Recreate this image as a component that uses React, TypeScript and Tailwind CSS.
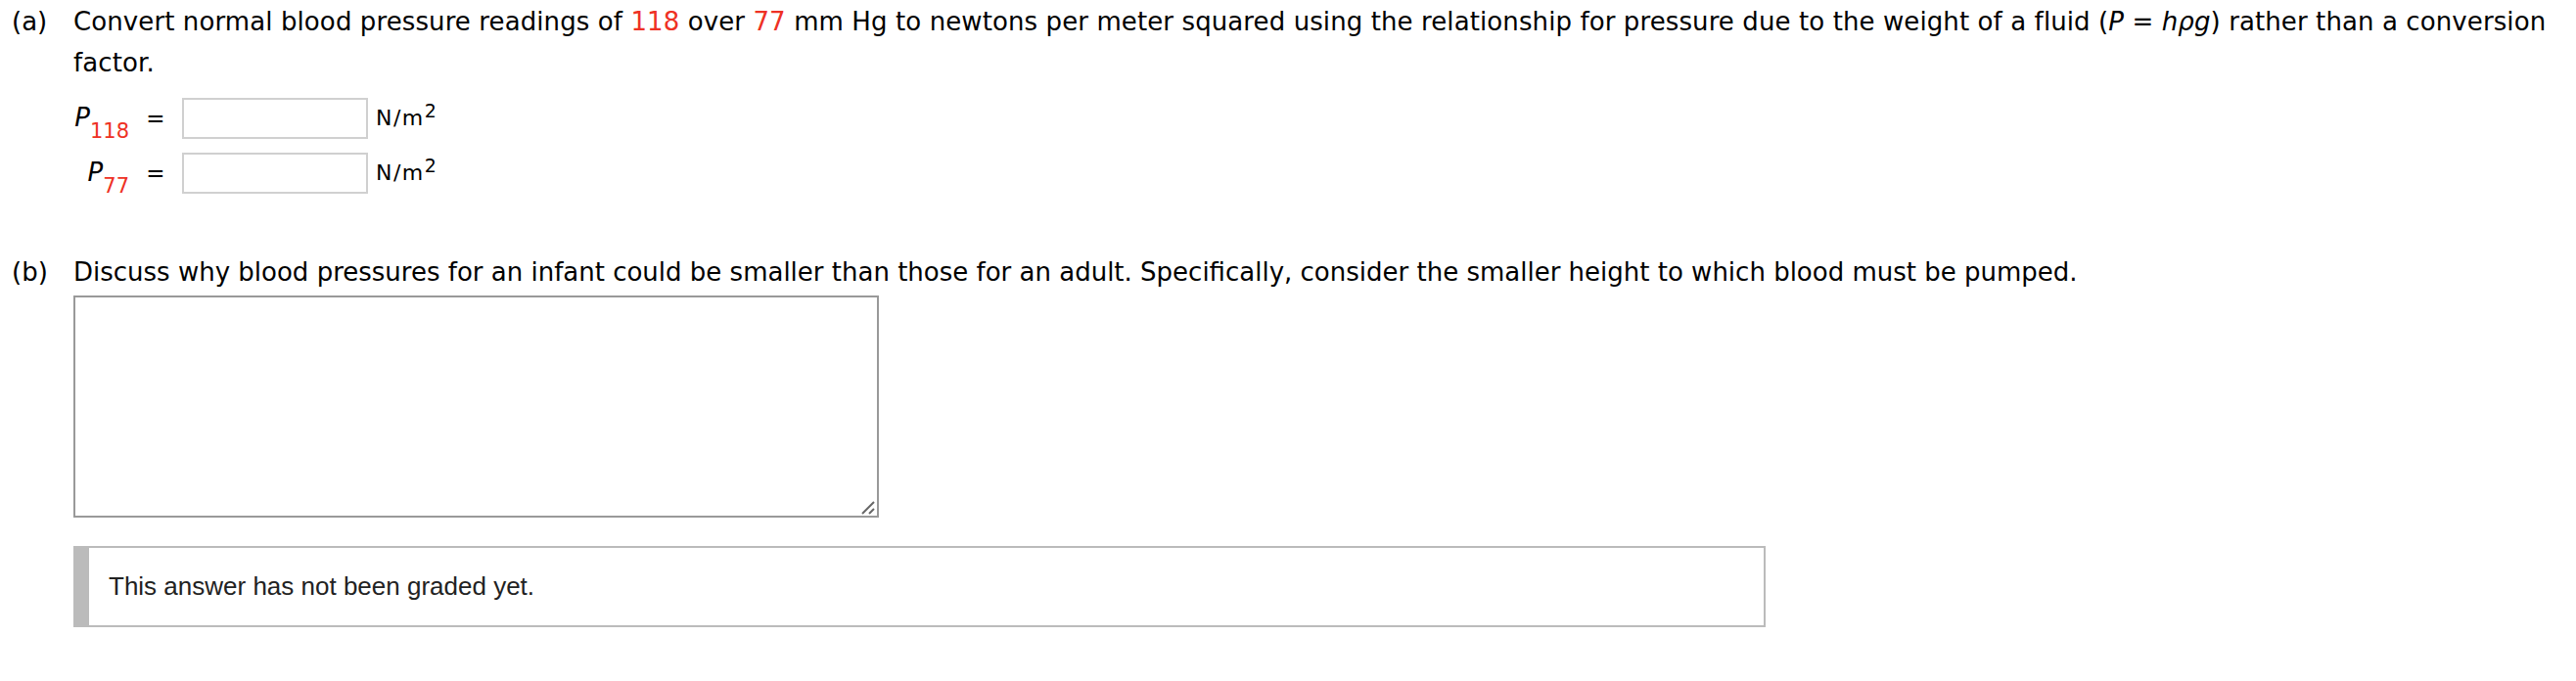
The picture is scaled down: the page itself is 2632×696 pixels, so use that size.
import React from "react";

function Red({ children }: { children: React.ReactNode }) {
  return <span className="text-[#ee3124]">{children}</span>;
}

function Row({ sub }: { sub: string }) {
  return (
    <div className="flex items-center h-[42px]">
      <div className="w-[57px] text-right whitespace-nowrap">
        <i>P</i>
        <span className="relative top-[12px] text-[21px] text-[#ee3124]">{sub}</span>
      </div>
      <div className="w-[54px] text-center text-[23px]">=</div>
      <input
        type="text"
        className="w-[190px] h-[42px] border-2 border-[#d0d0d0] bg-white outline-none"
      />
      <div className="ml-[8px] text-[22px] tracking-[1.5px] whitespace-nowrap">
        N/m<span className="relative top-[-8px] text-[19px]">2</span>
      </div>
    </div>
  );
}

export default function App() {
  return (
    <div className="w-[2632px] h-[696px] bg-white text-black font-['DejaVu_Sans',Verdana,sans-serif] text-[26px] leading-[42px]">
      <div className="flex pt-px">
        <div className="w-[75px] pl-[12px] shrink-0">(a)</div>
        <div className="flex-1 pr-[20px]">
          <p className="tracking-[0.1px]">
            Convert normal blood pressure readings of <Red>118</Red> over <Red>77</Red> mm Hg to newtons per
            meter squared using the relationship for pressure due to the weight of a fluid (<i>P</i> = <i>hρg</i>)
            rather than a conversion factor.
          </p>
          <div className="mt-[15px] flex flex-col gap-[14px]">
            <Row sub="118" />
            <Row sub="77" />
          </div>
        </div>
      </div>

      <div className="flex mt-[59px]">
        <div className="w-[75px] pl-[12px] shrink-0">(b)</div>
        <div className="flex-1">
          <p>
            Discuss why blood pressures for an infant could be smaller than those for an adult. Specifically,
            consider the smaller height to which blood must be pumped.
          </p>
          <div className="relative mt-[3px] w-[823px] h-[227px]">
            <textarea className="block w-full h-full resize-none border-2 border-[#999] bg-white outline-none" />
            <svg
              className="absolute right-[4px] bottom-[3px] pointer-events-none"
              width="14"
              height="14"
              viewBox="0 0 14 14"
            >
              <line x1="1" y1="13" x2="13" y2="1" stroke="#666" strokeWidth="2" />
              <line x1="8" y1="13" x2="13" y2="8" stroke="#666" strokeWidth="2" />
            </svg>
          </div>
          <div className="mt-[29px] w-[1729px] h-[83px] border-2 border-l-[16px] border-[#bbbbbb] flex items-center pl-[20px] font-['Liberation_Sans',Arial,sans-serif] text-[26px] leading-[29px] text-[#222]">
            This answer has not been graded yet.
          </div>
        </div>
      </div>
    </div>
  );
}
